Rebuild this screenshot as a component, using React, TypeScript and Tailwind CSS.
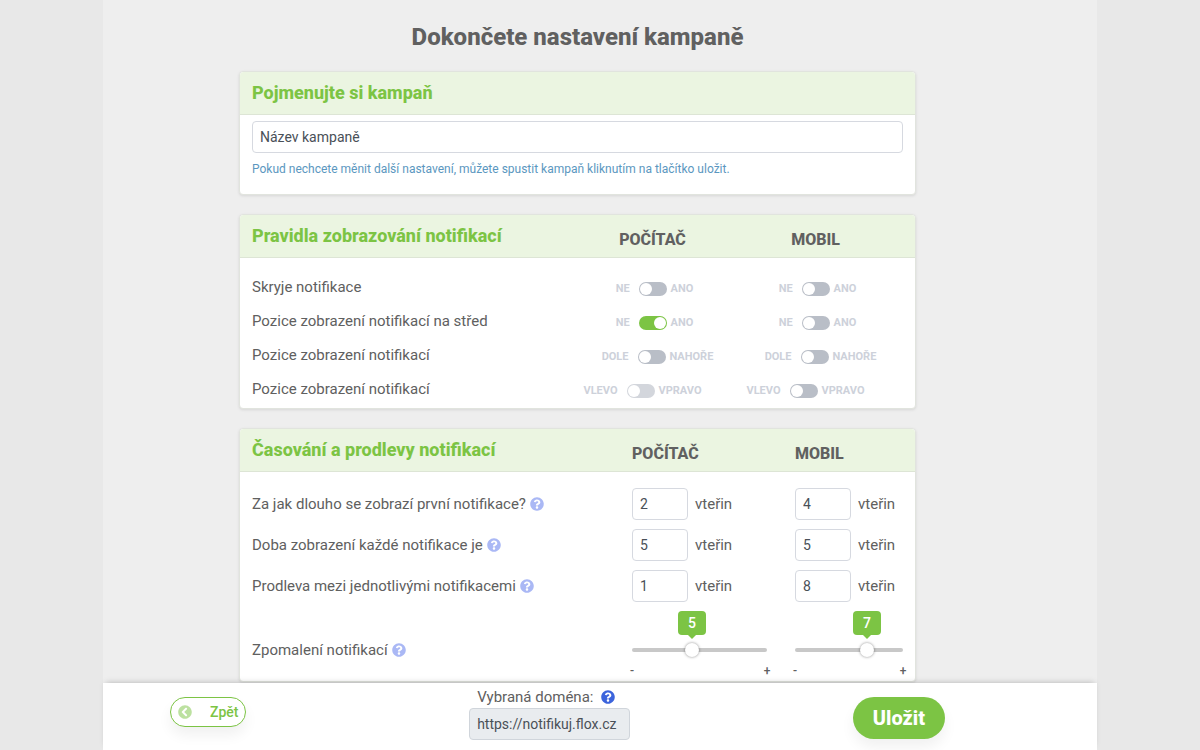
import { useState, type ReactNode } from "react";
import { FaChevronCircleLeft, FaQuestionCircle } from "react-icons/fa";

const RULES = [
  { label: "Skryje notifikace", off: "NE", on: "ANO", desktop: false, mobile: false, disabled: false, shift: "" },
  { label: "Pozice zobrazení notifikací na střed", off: "NE", on: "ANO", desktop: true, mobile: false, disabled: false, shift: "" },
  { label: "Pozice zobrazení notifikací", off: "DOLE", on: "NAHOŘE", desktop: false, mobile: false, disabled: false, shift: "pl-1.5" },
  { label: "Pozice zobrazení notifikací", off: "VLEVO", on: "VPRAVO", desktop: false, mobile: false, disabled: true, shift: "pr-6" },
];

const TIMINGS = [
  { label: "Za jak dlouho se zobrazí první notifikace?", desktop: 2, mobile: 4 },
  { label: "Doba zobrazení každé notifikace je", desktop: 5, mobile: 5 },
  { label: "Prodleva mezi jednotlivými notifikacemi", desktop: 1, mobile: 8 },
];

const RULES_GRID = "grid grid-cols-[1fr_163px_163px] pl-3 pr-4";
const TIMINGS_GRID = "grid grid-cols-[1fr_163px_108px] px-3";

function Card({ children }: { children: ReactNode }) {
  return (
    <section className="rounded border border-[#e1e4de] bg-white shadow-[0_1px_3px_rgba(0,0,0,0.1)]">
      {children}
    </section>
  );
}

function CardTitle({ children }: { children: ReactNode }) {
  return <h2 className="text-lg leading-[42px] font-extrabold text-[#7cc444]">{children}</h2>;
}

function ColumnTitle({ children }: { children: ReactNode }) {
  return <h3 className="pt-1 text-base leading-[42px] font-extrabold">{children}</h3>;
}

function Help({ label }: { label: string }) {
  return (
    <button type="button" aria-label={`Nápověda: ${label}`} className="text-[#aab8f5]">
      <FaQuestionCircle className="size-3.5" />
    </button>
  );
}

type ToggleProps = {
  name: string;
  off: string;
  on: string;
  initial: boolean;
  disabled?: boolean;
};

function Toggle({ name, off, on, initial, disabled }: ToggleProps) {
  const [checked, setChecked] = useState(initial);
  return (
    <label className="flex items-center text-[11px] font-bold text-[#cdd1da]">
      <span className="mr-[9px]">{off}</span>
      <input
        type="checkbox"
        role="switch"
        aria-label={name}
        checked={checked}
        disabled={disabled}
        onChange={(e) => setChecked(e.target.checked)}
        className="mr-1 flex h-3.5 w-7 appearance-none items-center rounded-full bg-[#b9bec7] px-px before:size-3 before:rounded-full before:bg-white checked:justify-end checked:bg-[#7cc444] disabled:bg-[#d3d6dc]"
      />
      <span>{on}</span>
    </label>
  );
}

function Seconds({ name, initial }: { name: string; initial: number }) {
  return (
    <label className="flex items-center gap-[7px]">
      <input
        type="text"
        inputMode="numeric"
        aria-label={name}
        defaultValue={initial}
        className="h-8 w-14 rounded border border-[#d6d9e0] bg-white px-[7px] text-sm text-[#495057]"
      />
      vteřin
    </label>
  );
}

function Slider({ name, initial }: { name: string; initial: number }) {
  const [value, setValue] = useState(initial);
  return (
    <div className="pt-8">
      <div className="relative flex h-3.5 items-center">
        <div className="h-1 w-full rounded-full bg-[#c8c8c8]" />
        {/* The input is one thumb wider than the track, so the thumb centre reaches both ends */}
        <input
          type="range"
          min={1}
          max={10}
          aria-label={name}
          value={value}
          onChange={(e) => setValue(Number(e.target.value))}
          className="absolute inset-y-0 -left-[7px] m-0 w-[calc(100%+14px)] appearance-none bg-transparent [&::-webkit-slider-thumb]:size-3.5 [&::-webkit-slider-thumb]:appearance-none [&::-webkit-slider-thumb]:rounded-full [&::-webkit-slider-thumb]:bg-white [&::-webkit-slider-thumb]:shadow-[0_0_3px_rgba(0,0,0,0.45)]"
        />
        <output
          className="absolute bottom-[22px] flex h-6 w-7 -translate-x-1/2 items-center justify-center rounded bg-[#7cc444] text-sm font-medium text-white after:absolute after:top-full after:border-x-4 after:border-t-4 after:border-x-transparent after:border-t-[#7cc444]"
          style={{ left: `${((value - 1) / 9) * 100}%` }}
        >
          {value}
        </output>
      </div>
      <div className="-mx-1 mt-1 flex justify-between text-xs leading-5 font-medium">
        <span className="w-2 text-center">-</span>
        <span className="w-2 text-center">+</span>
      </div>
    </div>
  );
}

export default function App() {
  return (
    <div className="min-h-screen bg-[#e8e8e8] font-['Roboto',sans-serif] text-[15px] text-[#606060]">
      <div className="mx-auto flex min-h-screen max-w-[994px] flex-col bg-[#eeeeee]">
        <main className="flex flex-1 flex-col gap-[19px] pr-[181px] pl-[136px]">
          <h1 className="-mb-[19px] pt-[21px] pb-[18px] text-center text-2xl font-extrabold">
            Dokončete nastavení kampaně
          </h1>

          <Card>
            <div className="rounded-t border-b border-[#dde5d5] bg-[#ebf5e1] px-3">
              <CardTitle>Pojmenujte si kampaň</CardTitle>
            </div>
            <div className="px-3 pt-1.5 pb-[17px]">
              <input
                type="text"
                aria-label="Název kampaně"
                aria-describedby="name-hint"
                defaultValue="Název kampaně"
                className="h-8 w-full rounded border border-[#d6d9e0] bg-white px-[7px] text-sm text-[#495057]"
              />
              <p id="name-hint" className="mt-2 text-xs text-[#5b97c0]">
                Pokud nechcete měnit další nastavení, můžete spustit kampaň kliknutím na tlačítko uložit.
              </p>
            </div>
          </Card>

          <Card>
            <div className={`${RULES_GRID} h-[43px] rounded-t border-b border-[#dde5d5] bg-[#ebf5e1] text-center`}>
              <div className="text-left">
                <CardTitle>Pravidla zobrazování notifikací</CardTitle>
              </div>
              <div className="pr-1">
                <ColumnTitle>POČÍTAČ</ColumnTitle>
              </div>
              <div className="pr-1">
                <ColumnTitle>MOBIL</ColumnTitle>
              </div>
            </div>
            <div className="pt-3 pb-0.5">
              {RULES.map((rule, i) => (
                <div key={i} className={`${RULES_GRID} h-[34px]`}>
                  <span className="leading-[34px]">{rule.label}</span>
                  <div className={`flex items-center justify-center pt-1 ${rule.shift}`}>
                    <Toggle
                      name={`${rule.label}, počítač`}
                      off={rule.off}
                      on={rule.on}
                      initial={rule.desktop}
                      disabled={rule.disabled}
                    />
                  </div>
                  <div className={`flex items-center justify-center pt-1 ${rule.shift}`}>
                    <Toggle name={`${rule.label}, mobil`} off={rule.off} on={rule.on} initial={rule.mobile} />
                  </div>
                </div>
              ))}
            </div>
          </Card>

          <Card>
            <div className={`${TIMINGS_GRID} h-[43px] rounded-t border-b border-[#dde5d5] bg-[#ebf5e1]`}>
              <CardTitle>Časování a prodlevy notifikací</CardTitle>
              <ColumnTitle>POČÍTAČ</ColumnTitle>
              <ColumnTitle>MOBIL</ColumnTitle>
            </div>
            <div className="flex flex-col gap-[9px] pt-4">
              {TIMINGS.map((timing) => (
                <div key={timing.label} className={`${TIMINGS_GRID} items-center`}>
                  <div className="flex items-center gap-1">
                    {timing.label}
                    <Help label={timing.label} />
                  </div>
                  <Seconds name={`${timing.label} Počítač`} initial={timing.desktop} />
                  <Seconds name={`${timing.label} Mobil`} initial={timing.mobile} />
                </div>
              ))}
              <div className={`${TIMINGS_GRID} items-center`}>
                <div className="flex items-center gap-1 pt-2">
                  Zpomalení notifikací
                  <Help label="Zpomalení notifikací" />
                </div>
                <div className="pr-7">
                  <Slider name="Zpomalení notifikací, počítač" initial={5} />
                </div>
                <Slider name="Zpomalení notifikací, mobil" initial={7} />
              </div>
            </div>
          </Card>
        </main>

        <footer className="sticky bottom-0 mt-px flex items-start justify-between bg-white pr-[152px] pb-[11px] pl-[67px] shadow-[0_-3px_6px_-3px_rgba(0,0,0,0.25)]">
          <button
            type="button"
            className="mt-3.5 flex h-[30px] items-center gap-[18px] rounded-full border border-[#7cc444] bg-white px-[7px] text-sm font-medium text-[#7cc444] shadow-[0_8px_14px_rgba(0,0,0,0.06)]"
          >
            <FaChevronCircleLeft className="size-3.5 opacity-50" />
            Zpět
          </button>
          <div className="pt-[3px]">
            <div className="flex items-center gap-2 pl-2">
              <label htmlFor="domain" className="leading-[22px]">
                Vybraná doména:
              </label>
              <button type="button" aria-label="Nápověda: Vybraná doména" className="text-[#3c64dc]">
                <FaQuestionCircle className="size-3.5" />
              </button>
            </div>
            <input
              id="domain"
              type="text"
              readOnly
              value="https://notifikuj.flox.cz"
              className="block h-8 w-[161px] rounded border border-[#d0d5db] bg-[#e9ecef] px-[7px] text-sm text-[#495057]"
            />
          </div>
          <button
            type="button"
            className="mt-3.5 h-[42px] rounded-full bg-[#7cc444] px-5 text-xl font-extrabold text-white shadow-[0_8px_14px_rgba(0,0,0,0.06)]"
          >
            Uložit
          </button>
        </footer>
      </div>
    </div>
  );
}
